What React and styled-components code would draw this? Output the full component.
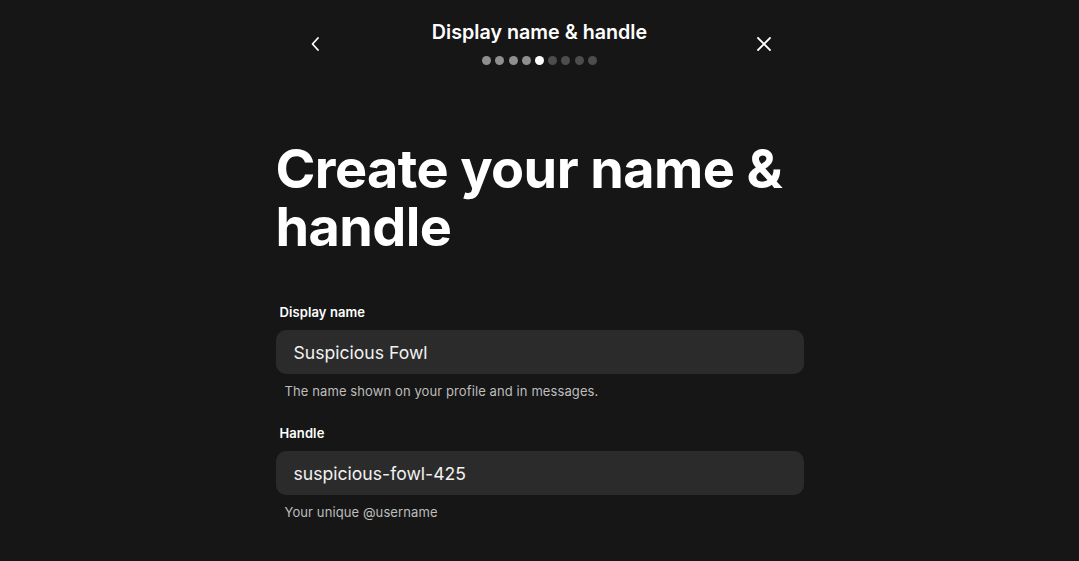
import React from 'react';
import styled, { createGlobalStyle } from 'styled-components';

const GlobalStyle = createGlobalStyle`
  html, body {
    margin: 0;
    background: #161616;
    color: #fff;
    font-family: Inter, "Noto Sans", sans-serif;
  }
`;

const Page = styled.div`
  min-height: 561px;
  display: flex;
  flex-direction: column;
  align-items: center;
`;

const Header = styled.header`
  width: 481px;
  display: flex;
  align-items: flex-start;
  justify-content: space-between;
  padding-top: 20px;
`;

const IconButton = styled.button`
  width: 32px;
  height: 32px;
  margin-top: 8px;
  display: flex;
  align-items: center;
  justify-content: center;
  background: none;
  border: 0;
  padding: 0;
  color: #fff;
  cursor: pointer;
`;

const HeaderCenter = styled.div`
  display: flex;
  flex-direction: column;
  align-items: center;
`;

const Title = styled.h2`
  margin: 0;
  font-size: 19.7px;
  font-weight: 600;
  line-height: 24px;
`;

const Steps = styled.div`
  display: flex;
  gap: 4.2px;
  margin-top: 12px;
`;

const Dot = styled.span`
  width: 9px;
  height: 9px;
  border-radius: 50%;
  background: ${p => (p.$state === 'current' ? '#fff' : p.$state === 'done' ? '#8f8f8f' : '#4d4d4d')};
`;

const Content = styled.main`
  width: 528px;
  padding-top: 75px;
`;

const Heading = styled.h1`
  margin: 0 0 48px;
  font-size: 54px;
  font-weight: 700;
  line-height: 58px;
  letter-spacing: -0.6px;
`;

const Field = styled.div`
  margin-bottom: 26px;
`;

const Label = styled.label`
  display: block;
  margin: 0 0 10px 4px;
  font-size: 13px;
  font-weight: 600;
  line-height: 16px;
  letter-spacing: 0.1px;
`;

const Input = styled.input`
  box-sizing: border-box;
  width: 100%;
  height: 44px;
  padding: 0 18px;
  border: 0;
  border-radius: 10px;
  background: #2b2b2b;
  color: #f2f2f2;
  font-family: inherit;
  font-size: 17.6px;
  outline: none;
`;

const Hint = styled.p`
  margin: 9px 0 0 9px;
  font-size: 13px;
  line-height: 16px;
  letter-spacing: 0.1px;
  color: #bdbdbd;
`;

const steps = ['done', 'done', 'done', 'done', 'current', 'todo', 'todo', 'todo', 'todo'];

export default function App() {
  return (
    <Page>
      <GlobalStyle />
      <Header>
        <IconButton aria-label="Back">
          <svg width="16" height="16" viewBox="0 0 16 16" fill="none" stroke="currentColor" strokeWidth="1.8" strokeLinecap="round" strokeLinejoin="round">
            <path d="M11 2 L5.5 8 L11 14" />
          </svg>
        </IconButton>
        <HeaderCenter>
          <Title>Display name &amp; handle</Title>
          <Steps>
            {steps.map((s, i) => <Dot key={i} $state={s} />)}
          </Steps>
        </HeaderCenter>
        <IconButton aria-label="Close">
          <svg width="16" height="16" viewBox="0 0 16 16" fill="none" stroke="currentColor" strokeWidth="1.8" strokeLinecap="round">
            <path d="M2 2 L14 14 M14 2 L2 14" />
          </svg>
        </IconButton>
      </Header>
      <Content>
        <Heading>Create your name &amp; handle</Heading>
        <Field>
          <Label>Display name</Label>
          <Input defaultValue="Suspicious Fowl" />
          <Hint>The name shown on your profile and in messages.</Hint>
        </Field>
        <Field>
          <Label>Handle</Label>
          <Input defaultValue="suspicious-fowl-425" />
          <Hint>Your unique @username</Hint>
        </Field>
      </Content>
    </Page>
  );
}
